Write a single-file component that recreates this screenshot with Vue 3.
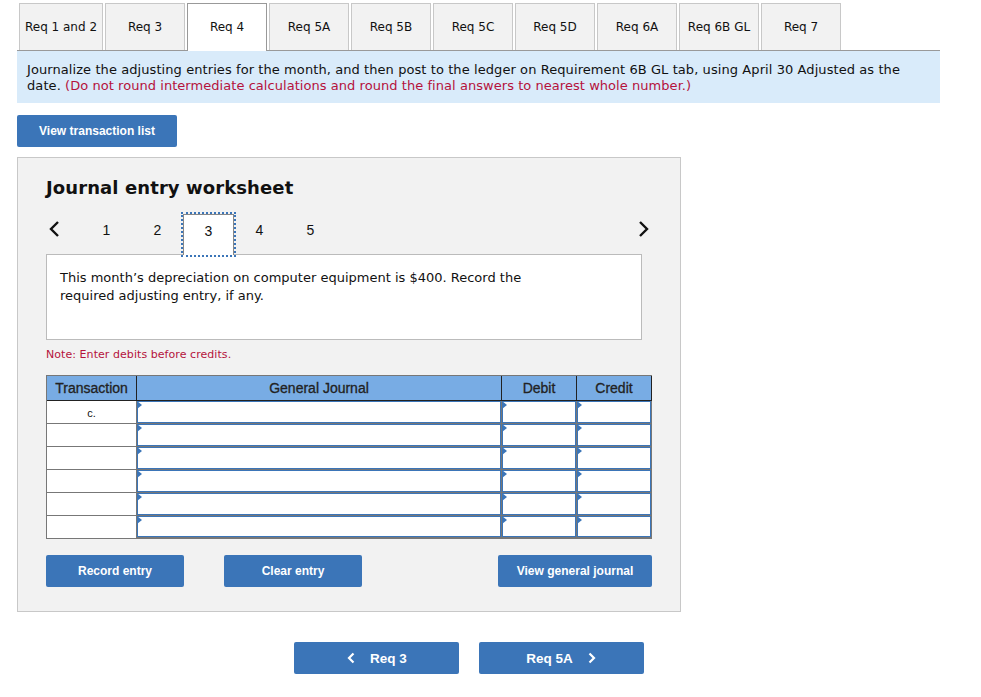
<template>
  <div class="page">
    <div class="tabs">
      <div v-for="t in tabs" :key="t" class="tab" :class="{ active: t === 'Req 4', first: t === 'Req 1 and 2' }">{{ t }}</div>
    </div>

    <div class="banner">
      <div>Journalize the adjusting entries for the month, and then post to the ledger on Requirement 6B GL tab, using April 30 Adjusted as the</div>
      <div>date. <span class="red">(Do not round intermediate calculations and round the final answers to nearest whole number.)</span></div>
    </div>

    <button class="btn view-list">View transaction list</button>

    <div class="panel">
      <h2>Journal entry worksheet</h2>

      <div class="stepper">
        <svg class="chev prev" width="12" height="18" viewBox="0 0 12 18"><path d="M10 2 L3 9 L10 16" fill="none" stroke="#111" stroke-width="2.4" /></svg>
        <div class="steps">
          <div v-for="n in 5" :key="n" class="step" :class="{ current: n === 3 }">{{ n }}</div>
        </div>
        <svg class="chev" width="12" height="18" viewBox="0 0 12 18"><path d="M2 2 L9 9 L2 16" fill="none" stroke="#111" stroke-width="2.4" /></svg>
      </div>

      <div class="question">
        <p>This month’s depreciation on computer equipment is $400. Record the required adjusting entry, if any.</p>
      </div>

      <div class="note">Note: Enter debits before credits.</div>

      <div class="grid">
        <div class="head">Transaction</div>
        <div class="head">General Journal</div>
        <div class="head">Debit</div>
        <div class="head last">Credit</div>
        <template v-for="(r, i) in rows" :key="i">
          <div class="trans" :class="{ bottom: i === rows.length - 1 }">{{ r }}</div>
          <div class="entry"></div>
          <div class="entry"></div>
          <div class="entry end"></div>
        </template>
      </div>

      <div class="actions">
        <div class="left-actions">
          <button class="btn act">Record entry</button>
          <button class="btn act">Clear entry</button>
        </div>
        <button class="btn act general">View general journal</button>
      </div>
    </div>

    <div class="nav">
      <button class="btn nav-btn">
        <svg width="10" height="12" viewBox="0 0 10 12"><path d="M7.5 1.5 L3 6 L7.5 10.5" fill="none" stroke="#fff" stroke-width="2.2" /></svg>
        <span>Req 3</span>
      </button>
      <button class="btn nav-btn">
        <span>Req 5A</span>
        <svg width="10" height="12" viewBox="0 0 10 12"><path d="M2.5 1.5 L7 6 L2.5 10.5" fill="none" stroke="#fff" stroke-width="2.2" /></svg>
      </button>
    </div>
  </div>
</template>

<script setup>
const tabs = ['Req 1 and 2', 'Req 3', 'Req 4', 'Req 5A', 'Req 5B', 'Req 5C', 'Req 5D', 'Req 6A', 'Req 6B GL', 'Req 7']
const rows = ['c.', '', '', '', '', '']
</script>

<style scoped>
.page {
  width: 923px;
  margin-left: 17px;
  padding-top: 3px;
  font-family: "DejaVu Sans", Verdana, sans-serif;
  color: #111;
}

.tabs {
  display: flex;
  gap: 2px;
  padding-left: 2px;
  border-bottom: 1px solid #999;
  height: 47px;
}

.tab {
  width: 80px;
  height: 47px;
  box-sizing: border-box;
  background: #f2f2f2;
  border: 1px solid #c8c8c8;
  border-bottom: none;
  font-size: 12px;
  display: flex;
  align-items: center;
  justify-content: center;
}

.tab.first {
  width: 84px;
}

.tab.active {
  background: #fff;
  height: 48px;
  padding-bottom: 1px;
  border-color: #999;
  position: relative;
  z-index: 1;
}

.banner {
  background: #d9ebfa;
  height: 52px;
  box-sizing: border-box;
  padding: 11px 10px 0;
  font-size: 13px;
  line-height: 16px;
  letter-spacing: 0.08px;
}

.red {
  color: #b5123c;
  letter-spacing: 0.05px;
}

.btn {
  background: #3b75b8;
  color: #fff;
  border: none;
  border-radius: 2px;
  font-family: "Liberation Sans", Arial, sans-serif;
  font-weight: bold;
  font-size: 12px;
  height: 32px;
  padding: 0;
}

.view-list {
  display: block;
  width: 160px;
  margin-top: 12px;
}

.panel {
  width: 664px;
  height: 455px;
  box-sizing: border-box;
  margin-top: 10px;
  background: #f2f2f2;
  border: 1px solid #c8c8c8;
  padding: 0 28px;
}

h2 {
  margin: 19px 0 0;
  font-size: 18px;
  line-height: 22px;
  font-weight: bold;
  letter-spacing: 0.1px;
}

.stepper {
  display: flex;
  align-items: flex-start;
  justify-content: space-between;
  width: 604px;
  height: 40px;
  margin-top: 15px;
}

.steps {
  display: flex;
  flex: 1;
  margin-left: 21px;
  height: 40px;
}

.step {
  width: 51px;
  height: 40px;
  display: flex;
  align-items: center;
  justify-content: center;
  box-sizing: border-box;
  padding-bottom: 8px;
  font-family: "Liberation Sans", Arial, sans-serif;
  font-size: 14px;
}

.step.current {
  background: #fff;
  height: 41px;
  outline: 2px dotted #3b75b8;
  outline-offset: 0;
  border: 1px solid #888;
  border-bottom: none;
  position: relative;
  z-index: 1;
}

.chev {
  flex: none;
  margin-top: 6px;
}

.chev.prev {
  margin-left: 2px;
}

.question {
  width: 596px;
  height: 86px;
  box-sizing: border-box;
  background: #fff;
  border: 1px solid #bbb;
  padding: 14px 13px 0;
  font-size: 13px;
  line-height: 18px;
}

.question p {
  margin: 0;
  width: 480px;
}

.note {
  margin-top: 8px;
  font-size: 11px;
  line-height: 14px;
  letter-spacing: 0.06px;
  color: #b5123c;
}

.grid {
  display: grid;
  grid-template-columns: 90px 365px 75px 74px;
  grid-template-rows: 25px repeat(5, 23px) 22px;
  width: 606px;
  box-sizing: border-box;
  margin-top: 13px;
  border: 1px solid #777;
  background: #fff;
}

.head {
  background: #78ace4;
  border-right: 1px solid #222;
  border-bottom: 1px solid #222;
  box-sizing: border-box;
  font-family: "Liberation Sans", Arial, sans-serif;
  font-size: 14px;
  font-weight: normal;
  color: #222;
  -webkit-text-stroke: 0.3px #222;
  display: flex;
  align-items: center;
  justify-content: center;
}

.head.last {
  border-right: none;
  box-shadow: 1px 0 0 #222;
}

.trans {
  border-right: 1px solid #777;
  border-bottom: 1px solid #777;
  box-sizing: border-box;
  font-family: "Liberation Sans", Arial, sans-serif;
  font-size: 11px;
  text-align: center;
  line-height: 24px;
}

.trans.bottom {
  border-bottom: none;
}

.entry {
  position: relative;
  box-sizing: border-box;
  border-right: 1px solid #777;
  border-bottom: 1px solid #777;
  box-shadow: inset 0 0 0 1px #3b75b8;
}

.entry.end {
  border-right: none;
}

.entry::before {
  content: "";
  position: absolute;
  left: 0;
  top: 0;
  border-left: 5px solid #3b75b8;
  border-top: 4px solid transparent;
  border-bottom: 4px solid transparent;
}

.actions {
  display: flex;
  justify-content: space-between;
  width: 606px;
  margin-top: 16px;
}

.left-actions {
  display: flex;
  gap: 40px;
}

.act {
  width: 138px;
}

.act.general {
  width: 154px;
}

.nav {
  display: flex;
  gap: 20px;
  margin-top: 30px;
  margin-left: 277px;
}

.nav-btn {
  width: 165px;
  font-size: 13.5px;
  display: flex;
  align-items: center;
  justify-content: center;
  gap: 14px;
}
</style>

<style>
html, body {
  background: #fff;
}
</style>
